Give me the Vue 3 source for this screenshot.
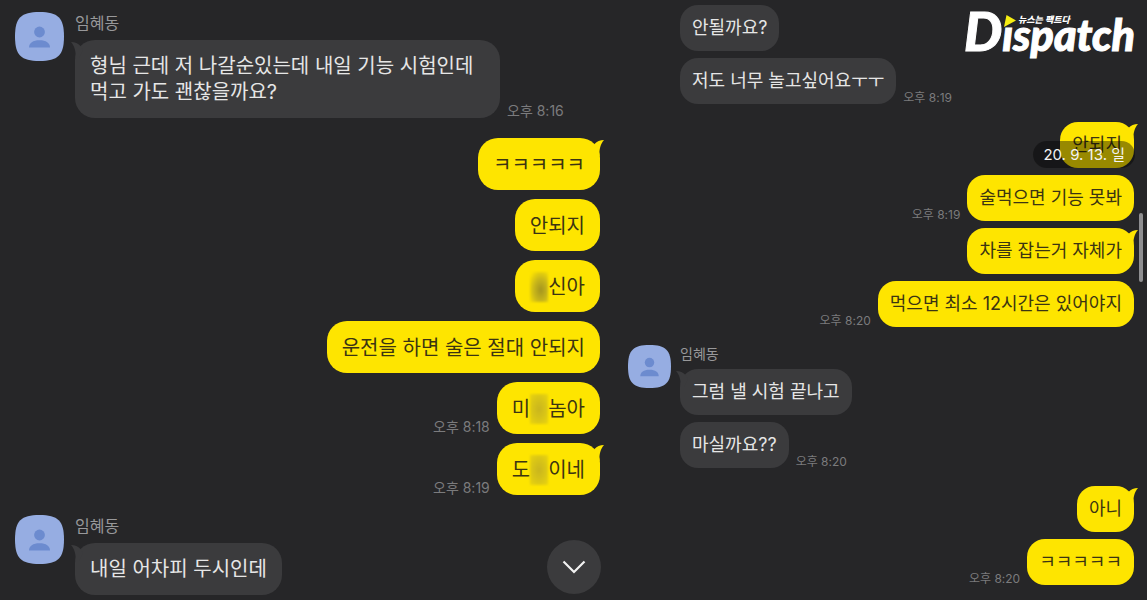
<script setup>
const SENDER = '임혜동'

const panes = [
  {
    id: 'wide',
    groups: [
      {
        from: 'them',
        named: true,
        messages: [
          { text: '형님 근데 저 나갈순있는데 내일 기능 시험인데 먹고 가도 괜찮을까요?', time: '오후 8:16', tail: true },
        ],
      },
      {
        from: 'me',
        messages: [
          { text: 'ㅋㅋㅋㅋㅋ', tail: true },
          { text: '안되지' },
          { text: '*신아', strong: true },
          { text: '운전을 하면 술은 절대 안되지' },
          { text: '미*놈아', time: '오후 8:18' },
          { text: '도*이네', time: '오후 8:19', tail: true },
        ],
      },
      {
        from: 'them',
        named: true,
        messages: [{ text: '내일 어차피 두시인데', tail: true }],
      },
    ],
  },
  {
    id: 'narrow',
    groups: [
      {
        from: 'them',
        messages: [
          { text: '안될까요?' },
          { text: '저도 너무 놀고싶어요ㅜㅜ', time: '오후 8:19' },
        ],
      },
      {
        from: 'me',
        messages: [
          { text: '안되지', tail: true, date: '20. 9. 13. 일' },
          { text: '술먹으면 기능 못봐', time: '오후 8:19' },
          { text: '차를 잡는거 자체가', tail: true },
          { text: '먹으면 최소 12시간은 있어야지', time: '오후 8:20' },
        ],
      },
      {
        from: 'them',
        named: true,
        messages: [
          { text: '그럼 낼 시험 끝나고', tail: true },
          { text: '마실까요??', time: '오후 8:20' },
        ],
      },
      {
        from: 'me',
        messages: [
          { text: '아니', tail: true },
          { text: 'ㅋㅋㅋㅋㅋ', time: '오후 8:20' },
        ],
      },
    ],
  },
]

// An asterisk marks a masked syllable.
const pieces = (text) => text.split(/(\*)/).filter(Boolean)
</script>

<template>
  <main class="board">
    <section v-for="pane in panes" :key="pane.id" class="pane" :class="pane.id">
      <div v-for="(group, g) in pane.groups" :key="g" class="group" :class="group.from">
        <div v-if="group.from === 'them'" class="side">
          <svg v-if="group.named" class="avatar" viewBox="0 0 49 49" aria-hidden="true">
            <path d="M24.500 0C43 0 49 6 49 24.500S43 49 24.500 49 0 43 0 24.500 6 0 24.500 0Z" fill="#96ade2" />
            <circle cx="24.500" cy="20" r="5.400" fill="#6c8bcf" />
            <path d="M14 35.500C14 31 18 28.300 24.500 28.300S35 31 35 35.500Z" fill="#6c8bcf" />
          </svg>
        </div>
        <div class="stack">
          <h2 v-if="group.named" class="name">{{ SENDER }}</h2>
          <div v-for="(m, i) in group.messages" :key="i" class="row">
            <div class="bubble">
              <svg v-if="m.tail" class="tail" viewBox="0 0 12 16" aria-hidden="true">
                <path d="M12 0C8 0 5 1.500 2.500 4L0 8L4 16H7.500C7 9 8.500 4 12 0Z" />
              </svg>
              <p class="text"><template v-for="(p, k) in pieces(m.text)" :key="k"><span v-if="p === '*'" class="mask" :class="{ strong: m.strong }"></span><template v-else>{{ p }}</template></template></p>
              <span v-if="m.date" class="date">{{ m.date }}</span>
            </div>
            <time v-if="m.time" class="time">{{ m.time }}</time>
          </div>
        </div>
      </div>

      <button v-if="pane.id === 'wide'" class="down" type="button" aria-label="맨 아래로">
        <svg viewBox="0 0 24 14" aria-hidden="true">
          <path d="M1.500 1.500L12 12L22.500 1.500" fill="none" stroke="#f2f2f2" stroke-width="2.200" />
        </svg>
      </button>
      <template v-else>
        <div class="logo">
          <span class="initial">D</span><span class="rest">ıspatch</span>
          <svg class="play" viewBox="0 0 12 12" aria-hidden="true"><path d="M2.500 0L12 5.500L0 12Z" fill="#f6ee12" /></svg>
          <span class="slogan">뉴스는 팩트다</span>
        </div>
        <div class="thumb"></div>
      </template>
    </section>
  </main>
</template>

<style>
body {
  margin: 0;
  background: #262628;
}
</style>

<style scoped>
.board {
  display: grid;
  grid-template-columns: 614fr 533fr;
  min-height: 100vh;
  background: #262628;
  font-family: Inter, "Noto Sans CJK KR", sans-serif;
}

.pane {
  position: relative;
  display: flex;
  flex-direction: column;
}

.wide {
  --size: 20px;
  --line: 26px;
  --pad-y: 13px;
  --pad-x: 15px;
  --gap: 9px;
  --radius: 20px;
  --avatar: 49px;
  --small: 14px;
  --name: 16px;
  --name-line: 22px;
  gap: 20px;
  padding: 12px 14px 5px 15px;
}

.narrow {
  --size: 18px;
  --line: 22px;
  --pad-y: 12px;
  --pad-x: 12px;
  --gap: 7px;
  --radius: 18px;
  --avatar: 43px;
  --small: 12px;
  --name: 14px;
  --name-line: 18px;
  gap: 18px;
  padding: 5px 13px 14px 14px;
}

.group {
  display: flex;
}

.me {
  justify-content: flex-end;
}

.side {
  flex: none;
  width: var(--avatar);
  margin-right: 11px;
}

.narrow .side {
  margin-right: 9px;
}

.avatar {
  display: block;
  width: var(--avatar);
  height: var(--avatar);
}

.stack {
  display: flex;
  flex-direction: column;
  gap: var(--gap);
}

.name {
  margin: 0 0 calc(6px - var(--gap));
  color: #98989a;
  font-size: var(--name);
  font-weight: 400;
  line-height: var(--name-line);
}

.row {
  display: flex;
  align-items: flex-end;
  gap: 7px;
}

.me .row {
  flex-direction: row-reverse;
}

.bubble {
  position: relative;
  box-sizing: border-box;
  max-width: 425px;
  padding: var(--pad-y) var(--pad-x);
  border-radius: var(--radius);
  background: #3b3b3d;
  color: #e6e6e6;
}

.me .bubble {
  background: #fee500;
  color: #3b3412;
}

.wide .me .bubble {
  padding-top: 14px;
  padding-bottom: 12px;
}

.text {
  margin: 0;
  font-size: var(--size);
  line-height: var(--line);
  word-break: keep-all;
}

.tail {
  position: absolute;
  top: 2px;
  left: -4px;
  width: 12px;
  height: 16px;
  fill: #3b3b3d;
  transform: scaleX(-1);
}

.me .tail {
  right: -4px;
  left: auto;
  fill: #fee500;
  transform: none;
}

.mask {
  display: inline-block;
  width: 18px;
  height: 30px;
  margin: -2px 0;
  vertical-align: top;
  background: radial-gradient(ellipse at 50% 50%, #c9b51e 0%, #d8c417 50%, #ecd60c 100%);
  filter: blur(1px);
}

.mask.strong {
  background: radial-gradient(ellipse at 60% 60%, #a3941f 0%, #c9b71a 45%, #fee500 90%);
}

.time {
  color: #7b7b7d;
  font-size: var(--small);
  line-height: var(--small);
  white-space: nowrap;
}

.date {
  position: absolute;
  top: 19px;
  right: -1px;
  padding: 0 10px;
  border-radius: 14px;
  background: rgba(0, 0, 0, 0.4);
  color: #f4f4f4;
  font-size: 15px;
  line-height: 27px;
  white-space: nowrap;
}

.down {
  position: absolute;
  right: 13px;
  bottom: 6px;
  display: flex;
  align-items: center;
  justify-content: center;
  width: 54px;
  height: 54px;
  padding: 0;
  border: 0;
  border-radius: 50%;
  background: #3b3b3d;
}

.down svg {
  width: 24px;
  height: 14px;
}

.logo {
  position: absolute;
  top: 4px;
  right: 12px;
  display: flex;
  align-items: baseline;
  color: #fff;
  font-family: Lato, sans-serif;
  font-style: italic;
  font-weight: 900;
  line-height: 54px;
}

.initial,
.rest {
  -webkit-text-stroke: 1px #fff;
}

.initial {
  font-size: 54px;
}

.rest {
  font-size: 43px;
}

.play {
  position: absolute;
  top: 11px;
  left: 40px;
  width: 12px;
  height: 12px;
}

.slogan {
  position: absolute;
  top: 10px;
  left: 54px;
  font-family: "Noto Sans CJK KR", sans-serif;
  font-size: 9px;
  line-height: 12px;
  white-space: nowrap;
}

.thumb {
  position: absolute;
  top: 213px;
  right: 4px;
  width: 4px;
  height: 69px;
  border-radius: 2px;
  background: #8f8f91;
}
</style>
